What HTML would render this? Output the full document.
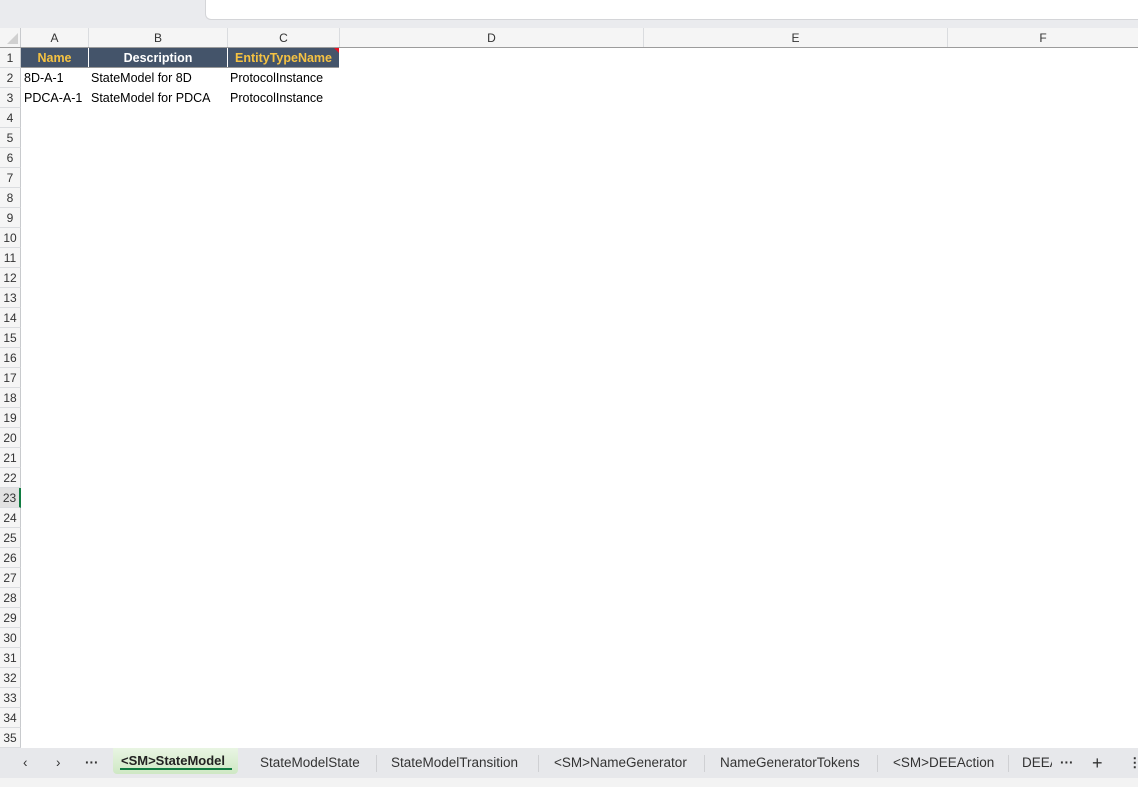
<!DOCTYPE html><html><head><style>
body{margin:0;width:1138px;height:787px;overflow:hidden;background:#fff;font-family:"Liberation Sans",sans-serif;position:relative}
.a{position:absolute}
.rh{position:absolute;left:0;width:20px;height:19px;border-bottom:1px solid #dadcdf;border-right:1px solid #c8cacd;background:#f5f5f5;font-size:12px;color:#333;text-align:center;line-height:20px}
.ch{position:absolute;top:28px;height:19px;border-right:1px solid #dadcdf;background:#f5f5f5;font-size:12px;color:#333;text-align:center;line-height:20px}
.c{position:absolute;font-size:12.5px;color:#000;line-height:20px;white-space:nowrap}
.h{position:absolute;top:48px;height:20px;background:#44546a;font-weight:bold;font-size:12.5px;text-align:center;line-height:20px;color:#fff}
.tab{position:absolute;top:748px;height:30px;line-height:30px;font-size:13.5px;color:#333;white-space:nowrap}
.sep{position:absolute;top:755px;width:1px;height:17px;background:#cfd0d3}
</style></head><body>
<div class="a" style="left:0;top:0;width:1138px;height:28px;background:#eaebee"></div>
<div class="a" style="left:205px;top:0;width:933px;height:19px;background:#fff;border-left:1px solid #d4d5d8;border-bottom:1px solid #d4d5d8;border-bottom-left-radius:6px"></div>
<div class="a" style="left:0;top:28px;width:20px;height:19px;background:#f5f5f5;border-right:1px solid #c8cacd"></div>
<div class="a" style="left:7px;top:33px;width:0;height:0;border-left:11px solid transparent;border-bottom:11px solid #d0d0d0"></div>
<div class="ch" style="left:21px;width:67px">A</div>
<div class="ch" style="left:89px;width:138px">B</div>
<div class="ch" style="left:228px;width:111px">C</div>
<div class="ch" style="left:340px;width:303px">D</div>
<div class="ch" style="left:644px;width:303px">E</div>
<div class="ch" style="left:948px;width:190px">F</div>
<div class="a" style="left:0;top:47px;width:1138px;height:1px;background:#9c9c9c"></div>
<div class="h" style="left:21px;width:67px;color:#f5c242">Name</div>
<div class="h" style="left:89px;width:138px">Description</div>
<div class="h" style="left:228px;width:111px;color:#f5c242">EntityTypeName</div>
<div class="a" style="left:334px;top:48px;width:0;height:0;border-left:5px solid transparent;border-top:5px solid #e81123"></div>
<div class="a" style="left:21px;top:67px;width:318px;height:1px;background:#999"></div>
<div class="c" style="left:24px;top:68px">8D-A-1</div>
<div class="c" style="left:91px;top:68px">StateModel for 8D</div>
<div class="c" style="left:230px;top:68px">ProtocolInstance</div>
<div class="c" style="left:24px;top:88px">PDCA-A-1</div>
<div class="c" style="left:91px;top:88px">StateModel for PDCA</div>
<div class="c" style="left:230px;top:88px">ProtocolInstance</div>
<div id="rows"></div>
<script>
var s='';for(var i=1;i<=35;i++){var t=48+(i-1)*20;s+='<div class="rh" style="top:'+t+'px;'+(i==23?'background:#e1e1e1;border-right:2px solid #107c41;width:19px':'')+'">'+i+'</div>';}
document.getElementById('rows').innerHTML=s;
</script>
<div class="a" style="left:0;top:748px;width:1138px;height:30px;background:#e7e8eb"></div>
<div class="a" style="left:0;top:778px;width:1138px;height:9px;background:#f3f3f3"></div>
<div class="tab" style="left:23px">&#8249;</div>
<div class="tab" style="left:56px">&#8250;</div>
<div class="tab" style="left:85px;font-weight:bold">&middot;&middot;&middot;</div>
<div class="a" style="left:113px;top:748px;width:125px;height:26px;background:linear-gradient(#e9f5e3,#cfe8c4);border-radius:0 0 4px 4px"></div>
<div class="tab" style="left:121px;top:746px;font-weight:bold;color:#222;font-size:13px">&lt;SM&gt;StateModel</div>
<div class="a" style="left:120px;top:768px;width:112px;height:2px;background:#107c41"></div>
<div class="tab" style="left:260px">StateModelState</div>
<div class="sep" style="left:376px"></div>
<div class="tab" style="left:391px">StateModelTransition</div>
<div class="sep" style="left:538px"></div>
<div class="tab" style="left:554px">&lt;SM&gt;NameGenerator</div>
<div class="sep" style="left:704px"></div>
<div class="tab" style="left:720px">NameGeneratorTokens</div>
<div class="sep" style="left:877px"></div>
<div class="tab" style="left:893px">&lt;SM&gt;DEEAction</div>
<div class="sep" style="left:1008px"></div>
<div class="tab" style="left:1022px;width:30px;overflow:hidden">DEEA</div>
<div class="tab" style="left:1060px;font-weight:bold">&middot;&middot;&middot;</div>
<div class="tab" style="left:1092px;font-size:18px">+</div>
<div class="tab" style="left:1128px;font-weight:bold">&#8942;</div>
</body></html>
